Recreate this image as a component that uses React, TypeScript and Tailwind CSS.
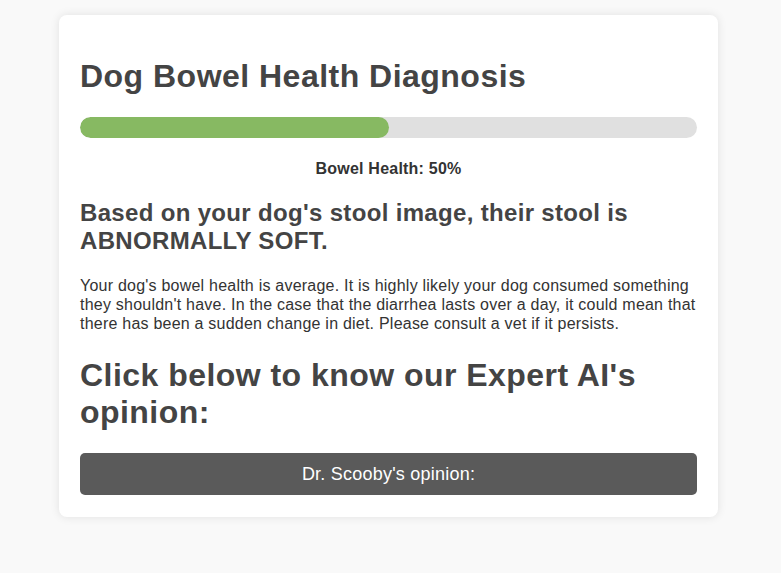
export default function App() {
  return (
    <div className="min-h-[573px] bg-[#f9f9f9] pt-[15px] pb-[20px] tracking-[0.224px]" style={{ fontFamily: '"Liberation Sans", Arial, sans-serif' }}>
      <div className="ml-[59px] w-[659px] rounded-[8px] bg-white px-[21px] pt-[20px] pb-[22px] shadow-[0_0_10px_rgba(0,0,0,0.1)]">
        <h1 className="mt-[23px] mb-[22px] text-[32px] font-bold leading-[37px] tracking-[0.48px] text-[#444]">Dog Bowel Health Diagnosis</h1>
        <div className="mt-[3px] h-[21px] w-full overflow-hidden rounded-full bg-[#e0e0e0]">
          <div className="h-full rounded-full bg-[#87b962]" style={{ width: '50%' }} />
        </div>
        <p className="mt-[22px] text-center text-[16px] font-bold leading-[18px] text-[#333]">Bowel Health: 50%</p>
        <h2 className="mt-[21px] text-[24px] font-bold leading-[28px] tracking-[0.33px] text-[#444]">
          Based on your dog's stool image, their stool is ABNORMALLY SOFT.
        </h2>
        <p className="mt-[21px] text-[16px] leading-[19px] text-[#333]">
          Your dog's bowel health is average. It is highly likely your dog consumed something they shouldn't have. In the case that the diarrhea lasts over a day, it could mean that there has been a sudden change in diet. Please consult a vet if it persists.
        </p>
        <h2 className="mt-[24px] text-[32px] font-bold leading-[37px] tracking-[0.46px] text-[#444]">Click below to know our Expert AI's opinion:</h2>
        <button className="mt-[22px] h-[42px] w-full rounded-[5px] bg-[#5a5a5a] text-[18px] text-white">Dr. Scooby's opinion:</button>
      </div>
    </div>
  );
}
